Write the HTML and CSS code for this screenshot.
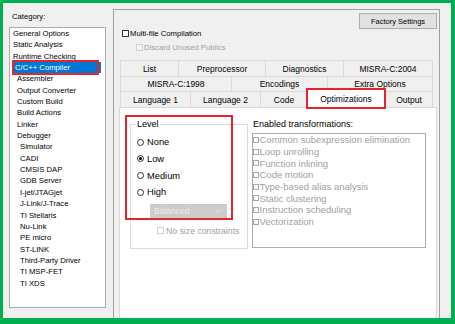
FILE: index.html
```html
<!DOCTYPE html>
<html>
<head>
<meta charset="utf-8">
<link rel="stylesheet" href="styles.css">
</head>
<body>
<div class="frame">
  <div class="left">
    <div class="cat-label">Category:</div>
    <ul class="cat-list">
      <li>General Options</li>
      <li>Static Analysis</li>
      <li>Runtime Checking</li>
      <li class="sel">C/C++ Compiler</li>
      <li class="l1">Assembler</li>
      <li class="l1">Output Converter</li>
      <li class="l1">Custom Build</li>
      <li class="l1">Build Actions</li>
      <li class="l1">Linker</li>
      <li class="l1">Debugger</li>
      <li class="l2">Simulator</li>
      <li class="l2">CADI</li>
      <li class="l2">CMSIS DAP</li>
      <li class="l2">GDB Server</li>
      <li class="l2">I-jet/JTAGjet</li>
      <li class="l2">J-Link/J-Trace</li>
      <li class="l2">TI Stellaris</li>
      <li class="l2">Nu-Link</li>
      <li class="l2">PE micro</li>
      <li class="l2">ST-LINK</li>
      <li class="l2">Third-Party Driver</li>
      <li class="l2">TI MSP-FET</li>
      <li class="l2">TI XDS</li>
    </ul>
  </div>
  <div class="group">
    <div class="top">
      <div class="checks">
        <div class="chk"><span class="box"></span><span>Multi-file Compilation</span></div>
        <div class="chk sub"><span class="box"></span><span>Discard Unused Publics</span></div>
      </div>
      <button class="factory">Factory Settings</button>
    </div>
    <div class="tabs">
      <div class="tab-row r1">
        <div class="tab w58">List</div>
        <div class="tab w87">Preprocessor</div>
        <div class="tab w78">Diagnostics</div>
        <div class="tab w90">MISRA-C:2004</div>
      </div>
      <div class="tab-row r2">
        <div class="tab w111">MISRA-C:1998</div>
        <div class="tab w96">Encodings</div>
        <div class="tab w106">Extra Options</div>
      </div>
      <div class="tab-row r3">
        <div class="tab w70">Language 1</div>
        <div class="tab w70">Language 2</div>
        <div class="tab w47">Code</div>
        <div class="tab w78 active">Optimizations</div>
        <div class="tab w48">Output</div>
      </div>
    </div>
    <div class="page">
      <fieldset class="level">
        <legend>Level</legend>
        <div class="radios">
          <div class="radio"><span class="circ"></span><span>None</span></div>
          <div class="radio on"><span class="circ"></span><span>Low</span></div>
          <div class="radio"><span class="circ"></span><span>Medium</span></div>
          <div class="radio"><span class="circ"></span><span>High</span></div>
        </div>
        <div class="select"><span>Balanced</span>
          <svg width="7" height="5" viewBox="0 0 7 5"><polyline points="1,1 3.5,3.5 6,1" fill="none" stroke="#e6e6e6" stroke-width="1"/></svg>
        </div>
        <div class="chk nsc"><span class="box"></span><span>No size constraints</span></div>
      </fieldset>
      <div class="trans">
        <div class="trans-label">Enabled transformations:</div>
        <div class="trans-list">
          <div class="ti"><span class="box"></span><span>Common subexpression elimination</span></div>
          <div class="ti"><span class="box"></span><span>Loop unrolling</span></div>
          <div class="ti"><span class="box"></span><span>Function inlining</span></div>
          <div class="ti"><span class="box"></span><span>Code motion</span></div>
          <div class="ti"><span class="box"></span><span>Type-based alias analysis</span></div>
          <div class="ti"><span class="box"></span><span>Static clustering</span></div>
          <div class="ti"><span class="box"></span><span>Instruction scheduling</span></div>
          <div class="ti"><span class="box"></span><span>Vectorization</span></div>
        </div>
      </div>
      <div class="anno-level"></div>
    </div>
  </div>
</div>
</body>
</html>
```
FILE: styles.css
```css
* { box-sizing: border-box; }
html, body { margin: 0; padding: 0; }
body {
  width: 455px; height: 324px; overflow: hidden;
  font-family: "Liberation Sans", Arial, sans-serif; color: #000;
}
.frame {
  width: 455px; height: 324px;
  border-style: solid; border-color: #00b050;
  border-width: 3px 4px 6px 3px;
  background: #f0f0f0;
  display: flex; overflow: hidden;
}
.left {
  width: 110px; flex: none;
  padding: 9px 0 0 6px;
  display: flex; flex-direction: column;
}
.cat-label {
  font-size: 7.7px; line-height: 10px; height: 10px;
  margin: 0 0 5px 3px;
}
.cat-list {
  list-style: none; margin: 0; padding: 0;
  width: 97px; height: 281px;
  background: #fff; border: 1px solid #abadb3;
  font-size: 7.7px; line-height: 11.35px;
}
.cat-list li { white-space: nowrap; padding-left: 3px; }
.cat-list .l1 { padding-left: 7px; }
.cat-list .l2 { padding-left: 10px; }
.cat-list .sel {
  background: #0078d7; color: #fff;
  margin: 0 4px 0 3px; padding-left: 2px;
  position: relative;
}
.cat-list .sel::after {
  content: ""; position: absolute;
  left: -1px; top: -2px; right: 2px; bottom: -2px;
  border: 2px solid #e8242b;
}
.group {
  width: 327px; flex: none; height: 330px;
  margin-top: 6px;
  border: 1px solid #a0a0a0;
  display: flex; flex-direction: column;
}
.top {
  display: flex; justify-content: space-between; align-items: flex-start;
  height: 44px; flex: none;
}
.checks { margin-top: 16px; padding-left: 8px; }
.chk {
  display: flex; align-items: center; height: 14px;
  font-size: 7.7px; gap: 1px; white-space: nowrap;
}
.box {
  display: inline-block; flex: none;
  width: 7px; height: 7px; border: 1px solid #333; background: #fff;
}
.chk.sub { padding-left: 14px; color: #a0a0a0; }
.chk.sub .box { border-color: #d0d0d0; background: #f4f4f4; }
.factory {
  margin: 3px 2px 0 0; width: 78px; height: 16px;
  border: 1px solid #adadad; background: #e1e1e1;
  font-family: "Liberation Sans", Arial, sans-serif; font-size: 7.5px;
  padding: 0; color: #000;
}
.tabs { margin: 6px 0 0 6px; width: 313px; flex: none; font-size: 8.5px; }
.tab-row { display: flex; align-items: flex-end; }
.r1 { height: 16px; }
.r2 { height: 15px; }
.r3 { height: 16px; }
.tab {
  height: 100%; flex: none;
  display: flex; align-items: center; justify-content: center;
  border-left: 1px solid #d9d9d9; border-top: 1px solid #d9d9d9;
  background: #f0f0f0; white-space: nowrap;
}
.tab:last-child { border-right: 1px solid #d9d9d9; }
.tab.active {
  height: 19px; background: #fff;
  border: 1px solid #d9d9d9; border-bottom: none;
  margin-bottom: -1px;
  position: relative; z-index: 1;
  outline: 2px solid #e8242b; outline-offset: -1px;
}
.w47 { width: 47px; } .w48 { width: 48px; } .w58 { width: 58px; }
.w70 { width: 70px; } .w78 { width: 78px; } .w87 { width: 87px; }
.w90 { width: 90px; } .w96 { width: 96px; } .w106 { width: 106px; }
.w111 { width: 111px; }
.page {
  flex: 1; margin: 0 2px 0 5px;
  background: #fff; border: 1px solid #d9d9d9;
  position: relative;
  display: flex; align-items: flex-start;
  padding: 11px 0 0 10px; gap: 4px;
}
.level {
  margin: 0; padding: 0 0 10px 6px;
  border: 1px solid #dcdcdc;
  width: 118px; min-width: 0; flex: none;
}
.level legend {
  margin-left: -1px; padding: 0 1px;
  font-size: 9px; line-height: 11px;
}
.radios { margin-top: 4px; }
.radio {
  display: flex; align-items: center; height: 16.67px;
  font-size: 9.3px; gap: 3px;
}
.circ {
  width: 7px; height: 7px; border-radius: 50%;
  border: 1px solid #333; background: #fff;
  display: flex; align-items: center; justify-content: center;
}
.radio.on .circ::after {
  content: ""; width: 3px; height: 3px; border-radius: 50%; background: #000;
}
.select {
  margin: 3px 0 0 13px; width: 77px; height: 15px;
  background: #cccccc; border: 1px solid #cccccc;
  color: #ececec; font-size: 8.5px;
  display: flex; align-items: center; justify-content: space-between;
  padding: 0 4px 0 3px;
}
.chk.nsc {
  margin: 5px 0 0 20px; font-size: 8.7px; color: #a0a0a0; gap: 2px;
}
.chk.nsc .box { border-color: #d0d0d0; }
.trans { width: 174px; flex: none; display: flex; flex-direction: column; }
.trans-label { font-size: 9px; line-height: 10px; height: 10px; margin-left: 1px; }
.trans-list {
  margin-top: 4px; height: 115px;
  border: 1px solid #adadad; background: #fff;
  font-size: 9.5px; color: #a0a0a0;
}
.ti { display: flex; align-items: center; height: 11.7px; white-space: nowrap; gap: 0.5px; }
.ti .box { width: 6px; height: 6px; border-color: #a8a8a8; }
.anno-level {
  position: absolute; left: 5px; top: 7px;
  width: 108px; height: 105px;
  border: 2px solid #e8242b;
}
```
